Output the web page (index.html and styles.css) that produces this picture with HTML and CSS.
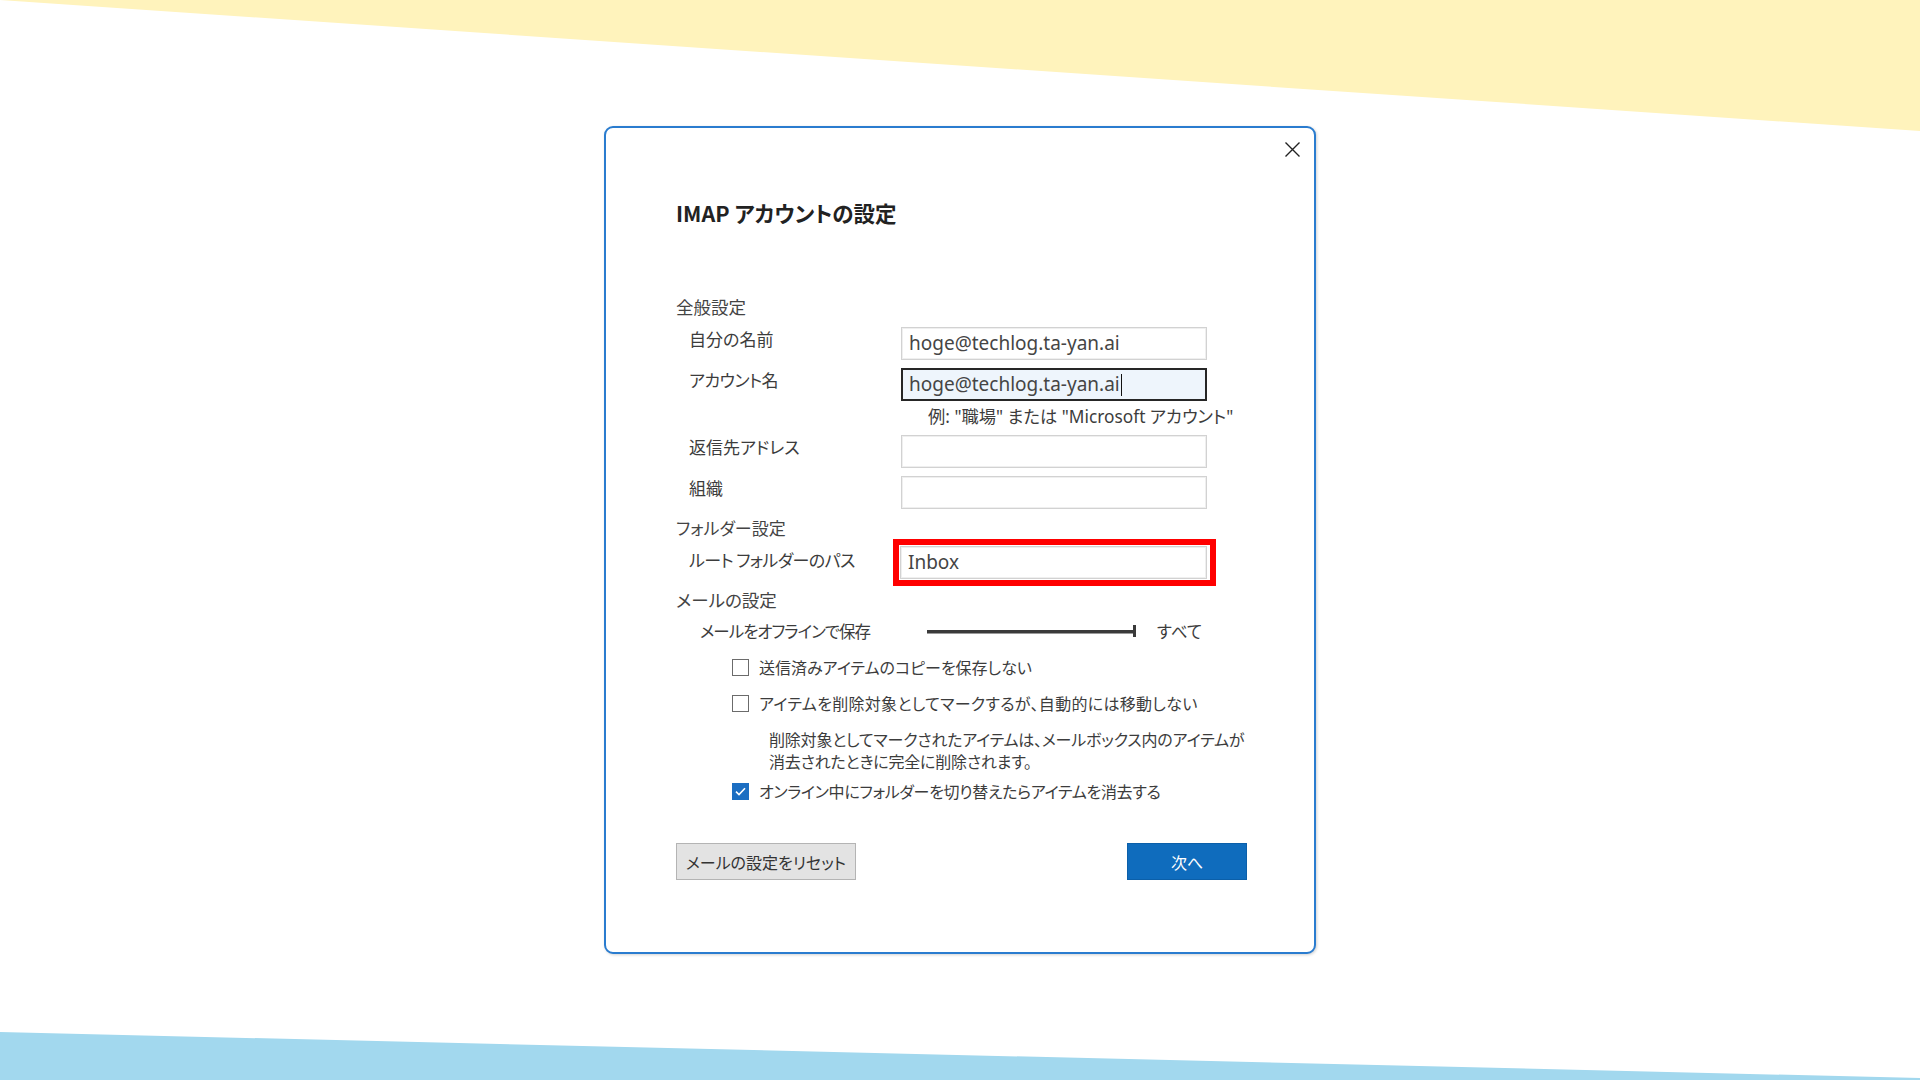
FILE: index.html
```html
<!doctype html>
<html>
<head>
<meta charset="utf-8">
<link rel="stylesheet" href="styles.css">
</head>
<body>
<div class="stage">
	<div class="band band-top"></div>
	<div class="band band-bottom"></div>

	<div class="dialog">
		<div class="dlg-head">
			<span class="close">
				<svg width="15" height="15" viewBox="0 0 15 15"><path d="M0.5 0.5L14.5 14.5M14.5 0.5L0.5 14.5" stroke="#222" stroke-width="1.4" fill="none"/></svg>
			</span>
		</div>

		<div class="dlg-body">
			<h1 class="title">IMAP アカウントの設定</h1>

			<div class="section sec-general">全般設定</div>
			<div class="row row1">
				<div class="label">自分の名前</div>
				<div class="field">hoge@techlog.ta-yan.ai</div>
			</div>
			<div class="row row2">
				<div class="label">アカウント名</div>
				<div class="field focus">hoge@techlog.ta-yan.ai<span class="caret"></span></div>
			</div>
			<div class="hint">例: "職場" または "Microsoft アカウント"</div>
			<div class="row row3">
				<div class="label">返信先アドレス</div>
				<div class="field"></div>
			</div>
			<div class="row row4">
				<div class="label">組織</div>
				<div class="field"></div>
			</div>

			<div class="section sec-folder">フォルダー設定</div>
			<div class="row row5">
				<div class="label">ルート フォルダーのパス</div>
				<div class="mark"><div class="field">Inbox</div></div>
			</div>

			<div class="section sec-mail">メールの設定</div>
			<div class="offline">
				<span class="offline-label">メールをオフラインで保存</span>
				<span class="slider"><span class="slider-end"></span></span>
				<span class="offline-value">すべて</span>
			</div>

			<div class="check cb1"><span class="box"></span>送信済みアイテムのコピーを保存しない</div>
			<div class="check cb2"><span class="box"></span>アイテムを削除対象としてマークするが、自動的には移動しない</div>
			<div class="desc">削除対象としてマークされたアイテムは、メールボックス内のアイテムが<br>消去されたときに完全に削除されます。</div>
			<div class="check cb3">
				<span class="box checked"><svg width="17" height="17" viewBox="0 0 17 17"><path d="M4 8.7L7 11.6L13 5.3" stroke="#fff" stroke-width="1.6" fill="none"/></svg></span>オンライン中にフォルダーを切り替えたらアイテムを消去する
			</div>

			<div class="buttons">
				<div class="btn btn-reset">メールの設定をリセット</div>
				<div class="btn btn-next">次へ</div>
			</div>
		</div>
	</div>
</div>
</body>
</html>
```

FILE: styles.css
```css
*{margin:0; padding:0; box-sizing:border-box;}
html,body{width:1920px; height:1080px; overflow:hidden; background:#fff;}
body{
	font-family:"Noto Sans CJK JP", sans-serif;
	font-feature-settings:"palt";
	color:#3c3c3c;
}

.stage{
	position:relative; width:1920px; height:1080px;
	display:flex; justify-content:center; align-items:flex-start;
	padding-top:126px;
}

/* background triangles */
.band{position:absolute; left:0; width:1920px;}
.band-top{
	top:0; height:131px; background:#fff3bc;
	clip-path:polygon(0 0, 100% 0, 100% 100%);
}
.band-bottom{
	bottom:0; height:48px; background:#a2d8ee;
	clip-path:polygon(0 0, 100% 46px, 100% 100%, 0 100%);
}

.dialog{
	position:relative;
	width:712px;
	background:#fff;
	border:2px solid #2a7ccf;
	border-radius:9px;
	box-shadow:1px 1px 3px rgba(0,0,0,0.18);
	padding-bottom:72px;
}

.dlg-head{
	display:flex; justify-content:flex-end;
	padding:14px 14px 0 0;
	height:29px;
}
.close{display:block; width:15px; height:15px;}
.close svg{display:block;}

.dlg-body{padding-left:70px;}

.title{
	margin-top:43px;
	font-size:21.5px; line-height:26px; font-weight:700;
	color:#222;
}

.section{font-size:17.5px; line-height:24px; color:#444;}
.sec-general{margin-top:69px;}
.sec-folder{margin-top:8px; line-height:22px; font-size:17px;}
.sec-mail{margin-top:2px;}

.row{display:flex; align-items:flex-start;}
.row .label{
	width:225px; padding-left:13px;
	font-size:17px; line-height:24px; color:#3c3c3c;
}
.row1{margin-top:8px;}
.row2{margin-top:8px;}
.row3{margin-top:6px;}
.row4{margin-top:8px;}
.row5 .label{margin-top:9px; letter-spacing:-0.6px;}
.row2 .label{letter-spacing:-0.5px;}

.field{
	width:306px; height:33px;
	border:1px solid #d2d2d2;
	box-shadow:inset 0 0 0 1px #efefef;
	padding-left:7px;
	font-family:"Noto Sans", sans-serif;
	font-size:19px; line-height:30px; color:#454545;
	background:#fff;
}
.field.focus{
	height:33px;
	border:2px solid #262626;
	box-shadow:none;
	padding-left:6px;
	line-height:28px;
	background:#eef5fc;
}
.caret{
	display:inline-block; width:1px; height:22px;
	background:#111; vertical-align:-5px; margin-left:1px;
}

.hint{
	margin-top:4px; padding-left:252px;
	font-size:17.3px; line-height:24px; color:#3c3c3c;
	font-family:"Noto Sans", "Noto Sans CJK JP", sans-serif;
}

/* red highlight around the folder path */
.mark{
	margin-left:-8px;
	border:6px solid #f00;
	padding:1px 3px 1px 1px;
}
.mark .field{width:307px; height:33px;}

.offline{
	display:flex; align-items:center;
	margin-top:7px; padding-left:24px;
	height:24px;
	font-size:16.5px; color:#3c3c3c;
}
.offline-label{width:227px; letter-spacing:-1px;}
.slider{
	position:relative; display:block;
	width:208px; height:3px;
	background:#3a3a3a;
	box-shadow:0 1px 0 #9a9a9a;
}
.slider-end{
	position:absolute; right:-1px; top:-5px;
	width:3px; height:12px; background:#3a3a3a;
}
.offline-value{margin-left:22px;}

.check{
	display:flex; align-items:center;
	padding-left:56px; height:24px;
	font-size:16px; color:#3c3c3c;
}
.check .box{
	display:block; width:17px; height:17px;
	border:1px solid #6b6b6b; background:#fff;
	margin-right:10px;
}
.check .box.checked{border:none; background:#1b6ec2;}
.check .box svg{display:block;}
.cb1{margin-top:12px;}
.cb2{margin-top:12px; letter-spacing:0.3px;}
.cb3{margin-top:7px; letter-spacing:-0.3px;}

.desc{
	margin-top:13px; padding-left:93px;
	font-size:16px; line-height:22px; color:#3c3c3c;
	letter-spacing:-0.2px;
}

.buttons{
	display:flex; justify-content:space-between;
	width:571px; margin-top:40px;
}
.btn{
	height:37px;
	display:flex; align-items:center; justify-content:center;
	font-size:16px;
}
.btn-reset{
	width:180px;
	background:#e3e3e3; border:1px solid #b4b4b4;
	color:#333;
}
.btn-next{
	width:120px;
	background:#0f6cbd; border:1px solid #0b5fa9;
	color:#fff;
}
```
